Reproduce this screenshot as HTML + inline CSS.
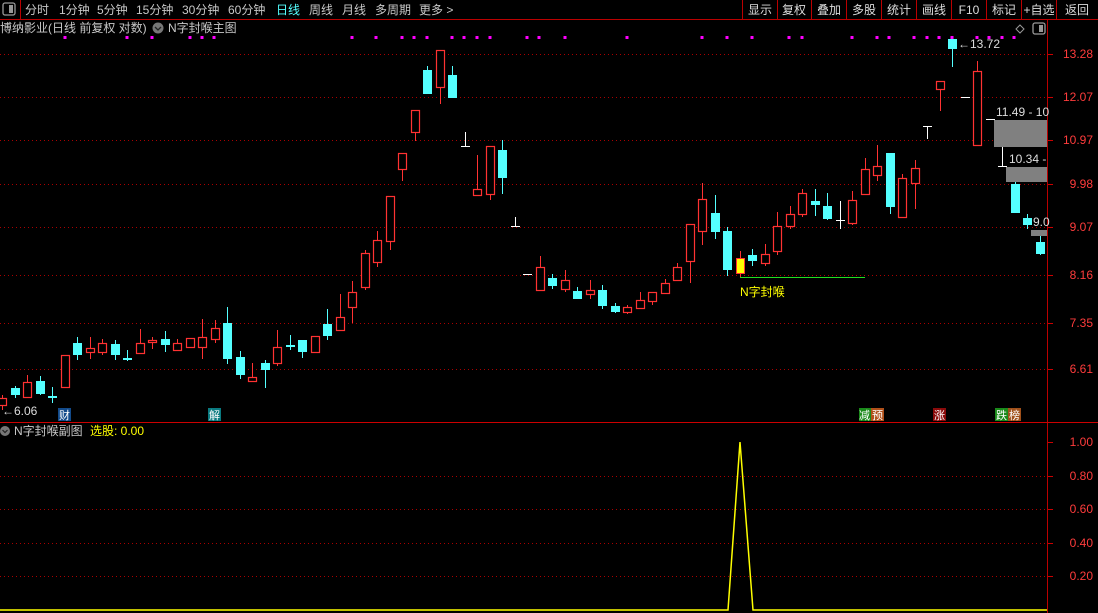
<!DOCTYPE html>
<html><head><meta charset="utf-8"><style>
body{margin:0;background:#000;width:1098px;height:613px;overflow:hidden;font-family:"Liberation Sans","Noto Sans CJK SC",sans-serif;}
svg{display:block}
text{font-family:"Liberation Sans","Noto Sans CJK SC",sans-serif;}
</style></head><body>
<svg id="s" width="1098" height="613" viewBox="0 0 1098 613" xmlns="http://www.w3.org/2000/svg">
<rect width="1098" height="613" fill="#000"/>
<!-- toolbar -->
<line x1="0" y1="19.5" x2="1098" y2="19.5" stroke="#b00" stroke-width="1"/>
<line x1="20.5" y1="0" x2="20.5" y2="19" stroke="#b00"/>
<rect x="3" y="3" width="12" height="12" rx="2" fill="none" stroke="#999" stroke-width="1.3"/>
<rect x="9" y="5" width="4" height="8" fill="#999"/>
<g font-size="12" fill="#c8c8c8">
<text x="25" y="14">分时</text><text x="59" y="14">1分钟</text><text x="97" y="14">5分钟</text><text x="136" y="14">15分钟</text><text x="182" y="14">30分钟</text><text x="228" y="14">60分钟</text><text x="276" y="14" fill="#5ff">日线</text><text x="309" y="14">周线</text><text x="342" y="14">月线</text><text x="375" y="14">多周期</text><text x="419" y="14">更多 &gt;</text>
</g>
<g stroke="#b00"><line x1="742.5" y1="0" x2="742.5" y2="19"/><line x1="777.5" y1="0" x2="777.5" y2="19"/><line x1="811.5" y1="0" x2="811.5" y2="19"/><line x1="846.5" y1="0" x2="846.5" y2="19"/><line x1="881.5" y1="0" x2="881.5" y2="19"/><line x1="916.5" y1="0" x2="916.5" y2="19"/><line x1="951.5" y1="0" x2="951.5" y2="19"/><line x1="986.5" y1="0" x2="986.5" y2="19"/><line x1="1021.5" y1="0" x2="1021.5" y2="19"/><line x1="1056.5" y1="0" x2="1056.5" y2="19"/></g>
<g font-size="12" fill="#ddd" text-anchor="middle"><text x="760" y="14">显示</text><text x="794" y="14">复权</text><text x="829" y="14">叠加</text><text x="864" y="14">多股</text><text x="899" y="14">统计</text><text x="934" y="14">画线</text><text x="969" y="14">F10</text><text x="1004" y="14">标记</text><text x="1039" y="14">+自选</text><text x="1077" y="14">返回</text></g>
<!-- title -->
<text x="0" y="32" font-size="12" fill="#c8c8c8">博纳影业(日线 前复权 对数)</text>
<circle cx="158" cy="28" r="5.5" fill="#777"/><path d="M155 27l3 3 3-3" stroke="#222" fill="none" stroke-width="1.3"/>
<text x="168" y="32" font-size="12" fill="#c8c8c8">N字封喉主图</text>
<path d="M1020 25l4 4-4 4-4-4z" fill="none" stroke="#999"/>
<rect x="1033" y="23" width="12" height="11" rx="2" fill="none" stroke="#999" stroke-width="1.3"/><rect x="1039" y="25" width="4" height="7" fill="#999"/>
<!-- axes -->
<line x1="1047.5" y1="20" x2="1047.5" y2="613" stroke="#b00"/>
<line x1="0" y1="422.5" x2="1098" y2="422.5" stroke="#c00"/>
<g id="grid" stroke="#a00" stroke-dasharray="1 3"></g>
<g id="ax" font-size="12" fill="#ff3c3c" text-anchor="end"></g>
<g id="dots" fill="#f0f"></g>
<g id="cs"></g>
<!-- gray boxes -->
<rect x="994" y="120" width="53" height="27" fill="#808080"/>
<rect x="1006" y="167" width="41" height="15" fill="#808080"/>
<rect x="1031" y="230" width="16" height="6" fill="#808080"/>
<g font-size="12" fill="#ddd"><text x="996" y="116">11.49 - 10</text><text x="1009" y="163">10.34 -</text><text x="1033" y="226">9.0</text><text x="958" y="48">←13.72</text><text x="2" y="415">←6.06</text></g>
<line x1="740" y1="277.5" x2="865" y2="277.5" stroke="#2d2"/>
<text x="740" y="296" font-size="12" fill="#ff0">N字封喉</text>
<!-- tags -->
<g font-size="11" fill="#fff">
<rect x="58" y="408" width="13" height="13" fill="#124a8a"/><text x="59" y="419">财</text>
<rect x="208" y="408" width="13" height="13" fill="#0a7a80"/><text x="209" y="419">解</text>
<rect x="859" y="408" width="12" height="13" fill="#1a8a1a"/><text x="859" y="419">减</text>
<rect x="871" y="408" width="13" height="13" fill="#b0501a"/><text x="872" y="419">预</text>
<rect x="933" y="408" width="13" height="13" fill="#8a0a0a"/><text x="934" y="419">涨</text>
<rect x="995" y="408" width="13" height="13" fill="#1a8a1a"/><text x="996" y="419">跌</text>
<rect x="1008" y="408" width="13" height="13" fill="#a0501a"/><text x="1009" y="419">榜</text>
</g>
<!-- sub chart -->
<circle cx="5" cy="431" r="5" fill="#777"/><path d="M2.5 430l2.5 2.5 2.5-2.5" stroke="#222" fill="none" stroke-width="1.2"/>
<text x="14" y="435" font-size="12" fill="#c8c8c8">N字封喉副图</text>
<text x="90" y="435" font-size="12" fill="#ff0">选股: 0.00</text>
<polyline points="0,610 728,610 740,442 753,610 1047,610" fill="none" stroke="#ff0" stroke-width="1.5"/>
</svg>
<script>
var ns="http://www.w3.org/2000/svg",g=document.getElementById('grid'),ax=document.getElementById('ax');
function el(p,t,a){var e=document.createElementNS(ns,t);for(var k in a)e.setAttribute(k,a[k]);p.appendChild(e);return e;}
[[54,"13.28"],[97,"12.07"],[140,"10.97"],[184,"9.98"],[227,"9.07"],[275,"8.16"],[323,"7.35"],[369,"6.61"]].forEach(function(v){el(g,'line',{x1:0,x2:1047,y1:v[0]+.5,y2:v[0]+.5});el(ax,'line',{x1:1048,x2:1053,y1:v[0]+.5,y2:v[0]+.5,stroke:'#c00'});var t=el(ax,'text',{x:1093,y:v[0]+4});t.textContent=v[1];});
[[476,"0.80"],[509,"0.60"],[543,"0.40"],[576,"0.20"]].forEach(function(v){el(g,'line',{x1:0,x2:1047,y1:v[0]+.5,y2:v[0]+.5});});
[[442,"1.00"],[476,"0.80"],[509,"0.60"],[543,"0.40"],[576,"0.20"]].forEach(function(v){el(ax,'line',{x1:1048,x2:1053,y1:v[0]+.5,y2:v[0]+.5,stroke:'#c00'});var t=el(ax,'text',{x:1093,y:v[0]+4});t.textContent=v[1];});
var d=document.getElementById('dots');
[65,127,152,190,202,214,352,376,402,414,427,452,464,477,490,527,539,565,627,702,727,752,789,802,852,877,889,914,927,939,952,977,989,1002,1014].forEach(function(x){el(d,'rect',{x:x-1.5,y:36,width:3,height:3});});
var C=[
[2,'r',398,405,395,410],[15,'c',388,395,386,398],[27,'r',382,397,375,397],[40,'c',381,394,376,395],[52,'c',396,398,387,403],
[65,'r',355,387,355,387],[77,'c',343,355,337,360],[90,'r',348,352,337,359],[102,'r',343,352,339,355],[115,'c',344,355,340,360],
[127,'c',358,360,350,361],[140,'r',343,353,329,353],[152,'r',340,342,337,349],[165,'c',339,345,331,352],[177,'r',343,350,339,351],
[190,'r',338,347,338,347],[202,'r',337,347,319,359],[215,'r',328,339,320,343],[227,'c',323,359,307,364],[240,'c',357,375,351,379],
[252,'r',377,381,363,381],[265,'c',363,370,360,388],[277,'r',347,363,330,366],[290,'c',345,347,335,350],[302,'c',340,352,340,358],
[315,'r',336,352,336,352],[327,'c',324,336,309,340],[340,'r',317,330,294,330],[352,'r',292,307,281,323],[365,'r',253,287,250,290],
[377,'r',240,262,231,267],[390,'r',196,241,196,250],[402,'r',153,169,153,181],[415,'r',110,132,110,141],[427,'c',70,94,66,94],
[440,'r',50,87,50,104],[452,'c',75,98,66,98],[465,'wT',146,146,132,146],[477,'r',189,195,155,195],[490,'r',146,194,146,200],
[502,'c',150,178,140,194],[515,'wT',226,226,217,226],[527,'wD',274,274,274,274],[540,'r',267,290,256,290],[552,'c',278,286,274,289],
[565,'r',280,289,270,292],[577,'c',291,299,287,299],[590,'r',290,294,280,299],[602,'c',290,306,285,309],[615,'c',306,312,303,313],
[627,'r',307,312,305,314],[640,'r',300,308,292,308],[652,'r',292,301,292,305],[665,'r',283,293,279,293],[677,'r',267,280,263,280],
[690,'r',224,261,224,283],[702,'r',199,231,183,245],[715,'c',213,232,195,239],[727,'c',231,270,227,276],[740,'y',258,273,251,277],
[752,'c',255,261,249,266],[765,'r',254,263,244,266],[777,'r',226,251,212,255],[790,'r',214,226,206,229],[802,'r',193,214,189,217],
[815,'c',201,205,189,216],[827,'c',206,219,193,220],[840,'wX',220,220,201,229],[852,'r',200,223,191,225],[865,'r',169,194,158,195],
[877,'r',166,175,145,181],[890,'c',153,207,153,214],[902,'r',178,217,174,217],[915,'r',168,183,160,209],[927,'wI',126,126,126,139],
[940,'r',81,89,81,111],[952,'c',39,49,39,67],[965,'wD',97,97,97,97],[977,'r',71,145,61,145],[990,'wD',119,119,119,119],
[1002,'wB',166,166,147,166],[1015,'c',184,213,182,213],[1027,'c',218,225,214,229],[1040,'c',242,254,236,255]];
var cs=document.getElementById('cs');
C.forEach(function(c){var x=c[0],t=c[1],bt=c[2],bb=c[3],wt=c[4],wb=c[5];
if(t[0]=='w'){el(cs,'line',{x1:x+.5,x2:x+.5,y1:wt,y2:wb,stroke:'#fff'});el(cs,'line',{x1:x-4,x2:x+5,y1:bt+.5,y2:bt+.5,stroke:'#fff'});return;}
var col=t=='c'?'#54ffff':'#ff3232';
el(cs,'line',{x1:x+.5,x2:x+.5,y1:wt,y2:wb,stroke:col});
if(t=='c'){el(cs,'rect',{x:x-4,y:bt,width:9,height:Math.max(2,bb-bt),fill:col});}
else if(t=='y'){el(cs,'rect',{x:x-3.5,y:bt+.5,width:8,height:bb-bt,fill:'#ff0',stroke:'#ff3232'});}
else{if(bb-bt<2){el(cs,'line',{x1:x-4,x2:x+5,y1:bt+.5,y2:bt+.5,stroke:col,'stroke-width':2});}else{el(cs,'rect',{x:x-3.5,y:bt+.5,width:8,height:bb-bt,fill:'#000',stroke:col,'stroke-width':1.2});}}
});
</script>
</body></html>
